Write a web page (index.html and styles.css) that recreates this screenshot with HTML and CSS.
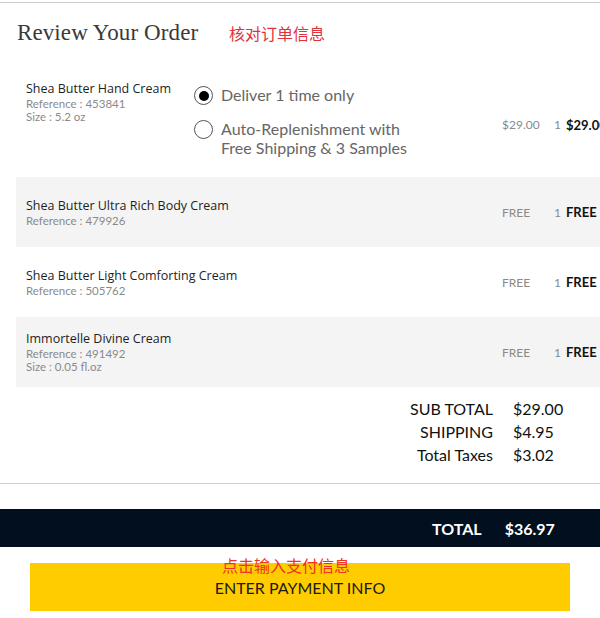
FILE: index.html
```html
<!DOCTYPE html>
<html>
<head>
<meta charset="utf-8">
<link rel="stylesheet" href="styles.css">
</head>
<body>
<div class="page">
  <header class="review-head">
    <h1 class="title">Review Your Order</h1>
    <span class="note note-head">核对订单信息</span>
  </header>

  <div class="items">
    <div class="item item-first">
      <div class="info info-top">
        <div class="name">Shea Butter Hand Cream</div>
        <div class="meta">Reference : 453841</div>
        <div class="meta">Size : 5.2 oz</div>
      </div>
      <div class="options">
        <label class="opt">
          <span class="radio checked"></span>
          <span class="opt-text">Deliver 1 time only</span>
        </label>
        <label class="opt">
          <span class="radio"></span>
          <span class="opt-text">Auto-Replenishment with<br>Free Shipping &amp; 3 Samples</span>
        </label>
      </div>
      <div class="price">$29.00</div>
      <div class="qty">1</div>
      <div class="total">$29.00</div>
    </div>

    <div class="item shaded">
      <div class="info">
        <div class="name">Shea Butter Ultra Rich Body Cream</div>
        <div class="meta">Reference : 479926</div>
      </div>
      <div class="options"></div>
      <div class="price">FREE</div>
      <div class="qty">1</div>
      <div class="total">FREE</div>
    </div>

    <div class="item">
      <div class="info">
        <div class="name">Shea Butter Light Comforting Cream</div>
        <div class="meta">Reference : 505762</div>
      </div>
      <div class="options"></div>
      <div class="price">FREE</div>
      <div class="qty">1</div>
      <div class="total">FREE</div>
    </div>

    <div class="item shaded">
      <div class="info">
        <div class="name">Immortelle Divine Cream</div>
        <div class="meta">Reference : 491492</div>
        <div class="meta">Size : 0.05 fl.oz</div>
      </div>
      <div class="options"></div>
      <div class="price">FREE</div>
      <div class="qty">1</div>
      <div class="total">FREE</div>
    </div>
  </div>

  <div class="summary">
    <div class="sum-label">SUB TOTAL</div><div class="sum-value">$29.00</div>
    <div class="sum-label">SHIPPING</div><div class="sum-value">$4.95</div>
    <div class="sum-label">Total Taxes</div><div class="sum-value">$3.02</div>
  </div>

  <div class="grand">
    <span class="grand-label">TOTAL</span>
    <span class="grand-value">$36.97</span>
  </div>

  <div class="cta-wrap">
    <button class="cta">ENTER PAYMENT INFO</button>
    <span class="note note-cta">点击输入支付信息</span>
  </div>
</div>
</body>
</html>
```

FILE: styles.css
```css
html, body {
  margin: 0;
  padding: 0;
  background: #fff;
}
body {
  overflow: hidden;
  width: 600px;
  height: 618px;
  font-family: Lato, "Noto Sans", sans-serif;
}
.page {
  margin-top: 2px;
  border-top: 1px solid #cfcfcf;
}
.review-head {
  display: flex;
  align-items: baseline;
  height: 65px;
  padding-left: 17px;
  box-sizing: border-box;
  padding-top: 17px;
}
.title {
  margin: 0;
  font-family: "Liberation Serif", "DejaVu Serif", serif;
  font-weight: normal;
  font-size: 23px;
  letter-spacing: 0.1px;
  color: #3a3a3a;
  width: 212px;
}
.note {
  color: #e0323a;
  font-family: "Noto Sans CJK SC", sans-serif;
  font-size: 16px;
}
.items {
  margin-left: 16px;
  width: 640px;
}
.item {
  display: flex;
  align-items: center;
  height: 70px;
}
.item-first {
  height: 109px;
}
.shaded {
  background: #f4f4f4;
}
.info {
  width: 168px;
  padding-left: 10px;
  box-sizing: content-box;
}
.info-top {
  align-self: flex-start;
  padding-top: 13px;
}
.name {
  font-family: "Open Sans", Lato, sans-serif;
  font-size: 12.5px;
  font-weight: 500;
  line-height: 16px;
  color: #1e1e1e;
  white-space: nowrap;
}
.meta {
  font-size: 11.5px;
  line-height: 13px;
  color: #8a8a8a;
}
.options {
  width: 308px;
  align-self: flex-start;
  padding-top: 17px;
  display: flex;
  flex-direction: column;
  gap: 14px;
}
.opt {
  display: flex;
  align-items: flex-start;
  gap: 8px;
}
.radio {
  width: 17px;
  height: 17px;
  border: 1.5px solid #555;
  border-radius: 50%;
  flex: none;
  display: flex;
  align-items: center;
  justify-content: center;
  margin-top: 1px;
}
.radio.checked::after {
  content: "";
  width: 10px;
  height: 10px;
  border-radius: 50%;
  background: #000;
}
.opt-text {
  font-size: 16px;
  line-height: 19px;
  color: #666;
}
.price {
  width: 52px;
  font-size: 12px;
  color: #8a8a8a;
}
.item-first .price, .item-first .qty, .item-first .total {
  margin-top: 4px;
}
.qty {
  width: 12px;
  font-size: 12px;
  color: #8a8a8a;
}
.total {
  font-size: 13px;
  font-weight: bold;
  color: #111;
}
.summary {
  display: grid;
  grid-template-columns: 178px auto;
  column-gap: 20px;
  justify-content: start;
  padding-left: 315px;
  padding-top: 10px;
  height: 86px;
  border-bottom: 1px solid #cfcfcf;
  align-content: start;
}
.sum-label {
  text-align: right;
  font-size: 16px;
  line-height: 23px;
  color: #111;
}
.sum-value {
  font-size: 16px;
  line-height: 23px;
  color: #111;
}
.grand {
  margin-top: 25px;
  height: 38px;
  background: #020f1f;
  display: flex;
  align-items: center;
  padding-left: 432px;
  gap: 23px;
  color: #fff;
  font-weight: bold;
  font-size: 16px;
}
.cta-wrap {
  position: relative;
  padding: 16px 30px 0;
}
.cta {
  display: block;
  width: 540px;
  height: 48px;
  border: none;
  background: #ffcc00;
  font-family: Lato, "Noto Sans", sans-serif;
  font-size: 16px;
  color: #1a1a1a;
  padding: 0;
}
.note-cta {
  position: absolute;
  left: 222px;
  top: 9px;
  color: #ee3322;
  font-size: 16px;
  line-height: 18px;
}
```
